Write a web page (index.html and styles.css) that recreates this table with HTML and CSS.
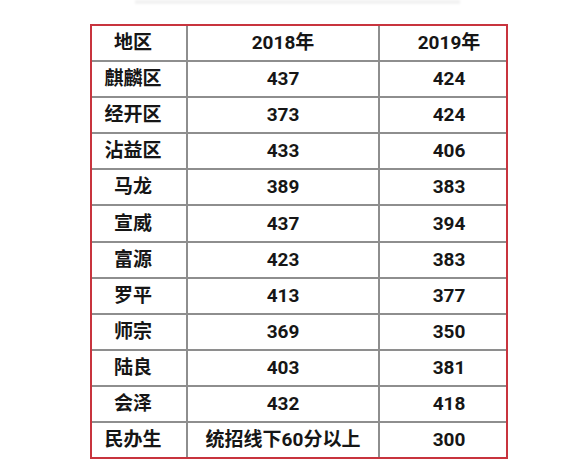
FILE: index.html
```html
<!DOCTYPE html>
<html lang="zh">
<head>
<meta charset="utf-8">
<link rel="stylesheet" href="styles.css">
</head>
<body>
<div class="ghost"></div>
<div class="frame">
<table class="scores">
<colgroup><col class="c1"><col class="c2"><col class="c3"></colgroup>
<tr><td class="area">地区</td><td>2018年</td><td class="y19">2019年</td></tr>
<tr><td class="area">麒麟区</td><td>437</td><td class="y19">424</td></tr>
<tr><td class="area">经开区</td><td>373</td><td class="y19">424</td></tr>
<tr><td class="area">沾益区</td><td>433</td><td class="y19">406</td></tr>
<tr><td class="area">马龙</td><td>389</td><td class="y19">383</td></tr>
<tr><td class="area">宣威</td><td>437</td><td class="y19">394</td></tr>
<tr><td class="area">富源</td><td>423</td><td class="y19">383</td></tr>
<tr><td class="area">罗平</td><td>413</td><td class="y19">377</td></tr>
<tr><td class="area">师宗</td><td>369</td><td class="y19">350</td></tr>
<tr><td class="area">陆良</td><td>403</td><td class="y19">381</td></tr>
<tr><td class="area">会泽</td><td>432</td><td class="y19">418</td></tr>
<tr><td class="area">民办生</td><td>统招线下60分以上</td><td class="y19">300</td></tr>
</table>
</div>
</body>
</html>
```
FILE: styles.css
```css
html, body {
  margin: 0;
  padding: 0;
  background: #ffffff;
}
body {
  width: 587px;
  height: 474px;
  overflow: hidden;
  font-family: Roboto, "Noto Sans CJK SC", sans-serif;
}
.ghost {
  width: 325px;
  height: 4px;
  margin-left: 135px;
  background: #f2f2f2;
  filter: blur(1px);
}
.frame {
  margin-top: 20px;
  margin-left: 90px;
  width: 414px;
  border: 2px solid #c8343e;
}
.scores {
  width: 414px;
  border-collapse: collapse;
  border-style: hidden;
  table-layout: fixed;
}
.c1 { width: 95px; }
.c2 { width: 192px; }
.c3 { width: 127px; }
.scores td {
  border: 2px solid #8e8e8e;
  height: 34.1px;
  padding: 0;
  text-align: center;
  vertical-align: middle;
  font-size: 19px;
  font-weight: bold;
  color: #161616;
  line-height: 20px;
}
.scores td.area {
  padding-right: 12px;
}
.scores td.y19 {
  padding-left: 12px;
}
```
